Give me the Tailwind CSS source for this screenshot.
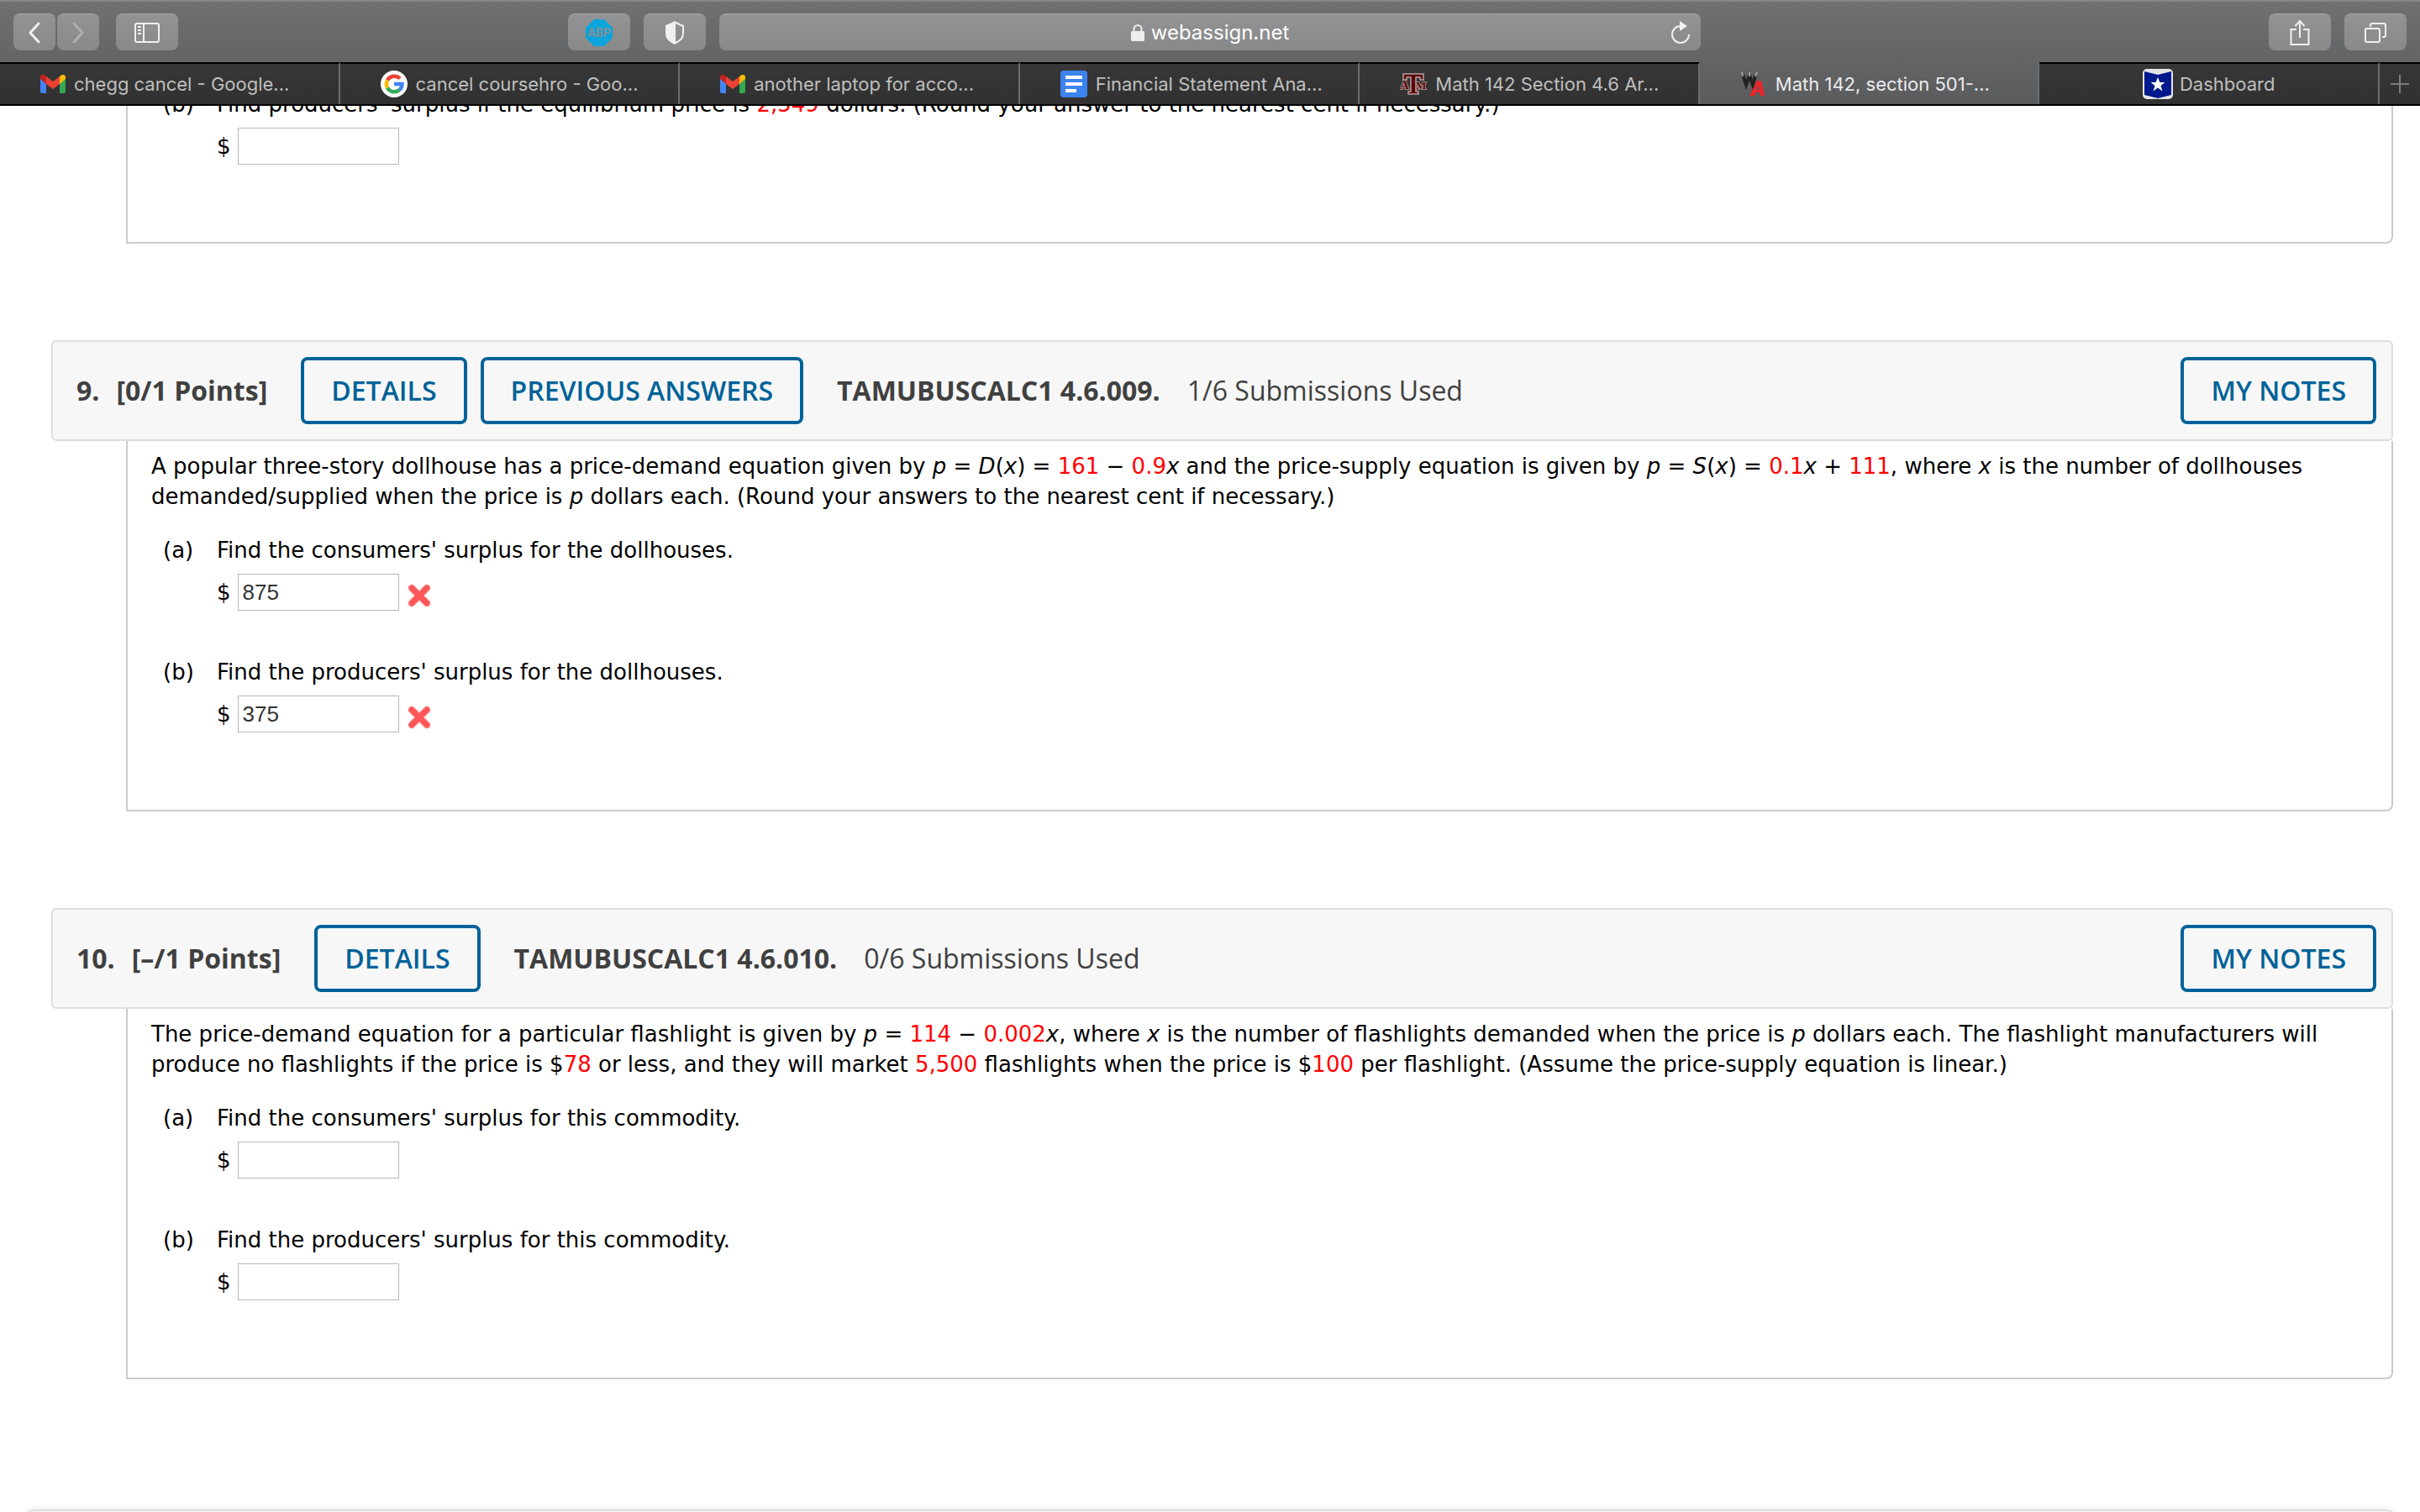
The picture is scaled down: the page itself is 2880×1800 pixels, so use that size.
<!DOCTYPE html>
<html lang="en">
<head>
<meta charset="utf-8">
<title>Math 142, section 501</title>
<script src="https://cdn.jsdelivr.net/npm/@tailwindcss/browser@4"></script>
</head>
<body class="flex h-screen flex-col overflow-hidden bg-white font-['DejaVu_Sans',sans-serif] text-[26px] leading-9 text-black">

<!-- Browser chrome -->
<header class="shrink-0 border-b-2 border-black bg-linear-to-b from-[#707173] to-[#5a5b5d] font-[Inter,sans-serif] text-[22px]">
  <div class="flex h-[74px] items-center border-t-2 border-[#868789] px-4">
    <div class="flex flex-1 items-center">
      <button aria-label="Back" class="flex h-11 w-[50px] items-center justify-center rounded-lg border-t border-[#a5a6a7] bg-linear-to-b from-[#929394] to-[#89898a]">
        <svg class="h-7 w-5" viewBox="0 0 20 28" fill="none" stroke="#f0f0f0" stroke-width="3" stroke-linecap="round" stroke-linejoin="round"><path d="M15 3 5 14l10 11"/></svg>
      </button>
      <button aria-label="Forward" class="ml-0.5 flex h-11 w-[50px] items-center justify-center rounded-lg border-t border-[#a5a6a7] bg-linear-to-b from-[#929394] to-[#89898a]">
        <svg class="h-7 w-5" viewBox="0 0 20 28" fill="none" stroke="#b0b0b1" stroke-width="3" stroke-linecap="round" stroke-linejoin="round"><path d="m5 3 10 11L5 25"/></svg>
      </button>
      <button aria-label="Show sidebar" class="ml-5 flex h-11 w-[74px] items-center justify-center rounded-lg border-t border-[#a5a6a7] bg-linear-to-b from-[#929394] to-[#89898a]">
        <svg class="h-6 w-[30px]" viewBox="0 0 30 24" fill="none" stroke="#f0f0f0" stroke-width="2"><rect x="1" y="1" width="28" height="22" rx="2"/><path d="M11 1v22M4 5h4M4 9h4M4 13h4"/></svg>
      </button>
      <button aria-label="Adblock Plus" class="ml-auto flex h-11 w-[74px] items-center justify-center rounded-lg border-t border-[#a5a6a7] bg-linear-to-b from-[#929394] to-[#89898a]">
        <svg class="size-8" viewBox="0 0 32 32"><path d="M10 0h12l10 10v12L22 32H10L0 22V10z" fill="#0aa5dc"/><text x="16" y="21" text-anchor="middle" font-family="Roboto" font-weight="700" font-size="14" fill="#858f94">ABP</text></svg>
      </button>
      <button aria-label="Privacy report" class="ml-4 flex h-11 w-[74px] items-center justify-center rounded-lg border-t border-[#a5a6a7] bg-linear-to-b from-[#929394] to-[#89898a]">
        <svg class="h-7 w-6" viewBox="0 0 24 28" fill="none" stroke="#f0f0f0" stroke-width="2"><path d="M12 1.500 22 6v9c0 5-4 9-10 11.500C6 24 2 20 2 15V6z"/><path d="M12 1.500v25C6 24 2 20 2 15V6z" fill="#f0f0f0"/></svg>
      </button>
    </div>
    <div class="mx-4 flex h-11 w-[41%] items-center rounded-lg border-t border-[#a5a6a7] bg-linear-to-b from-[#929394] to-[#89898a] px-3">
      <div class="flex flex-1 items-center justify-center gap-2 pl-6 text-[24px] text-white">
        <svg class="h-5 w-4" viewBox="0 0 16 20"><path d="M3.500 9V5.500a4.500 4.500 0 0 1 9 0V9" fill="none" stroke="#eee" stroke-width="2"/><rect y="8" width="16" height="12" rx="1.500" fill="#eee"/></svg>
        <span>webassign.net</span>
      </div>
      <button aria-label="Reload" class="flex">
        <svg class="h-7 w-6" viewBox="0 0 24 28"><path d="M12 6a10 10 0 1 0 10 10" fill="none" stroke="#f0f0f0" stroke-width="2"/><path d="m11 0 9 6-9 6z" fill="#f0f0f0"/></svg>
      </button>
    </div>
    <div class="flex flex-1 justify-end gap-4">
      <button aria-label="Share" class="flex h-11 w-[74px] items-center justify-center rounded-lg border-t border-[#a5a6a7] bg-linear-to-b from-[#929394] to-[#89898a]">
        <svg class="h-8 w-6" viewBox="0 0 24 32" fill="none" stroke="#f0f0f0" stroke-width="2"><path d="M8 12H1.500v18h21V12H16M12 22V2M6.500 8 12 2l5.500 6"/></svg>
      </button>
      <button aria-label="Show all tabs" class="flex h-11 w-[74px] items-center justify-center rounded-lg border-t border-[#a5a6a7] bg-linear-to-b from-[#929394] to-[#89898a]">
        <svg class="h-6 w-[26px]" viewBox="0 0 26 24" fill="none" stroke="#f0f0f0" stroke-width="2"><rect x="1" y="7" width="17" height="16" rx="2"/><path d="M7 5V3a2 2 0 0 1 2-2h14a2 2 0 0 1 2 2v12a2 2 0 0 1-2 2h-2"/></svg>
      </button>
    </div>
  </div>
  <nav aria-label="Tabs" class="grid h-[50px] grid-cols-[repeat(7,1fr)_48px] text-[#bfbfbf]">
    <a href="#" class="flex items-center gap-[10px] border-t-2 border-r-2 border-t-black border-r-[#6c6d6e] bg-linear-to-b from-[#373737] to-[#303130] pl-12">
      <svg class="h-[22px] w-[30px]" viewBox="0 0 30 22"><path d="M0 3v17a2 2 0 0 0 2 2h5V9z" fill="#4285f4"/><path d="M30 3v17a2 2 0 0 1-2 2h-5V9z" fill="#34a853"/><path d="M23 2v9l7-6V3c0-3-3-4-5-2.500z" fill="#fbbc04"/><path d="M7 2v9L0 5V3C0 0 3-1 5 .5z" fill="#c5221f"/><path d="M7 2l8 6 8-6v9l-8 6-8-6z" fill="#ea4335"/></svg>
      <span>chegg cancel - Google...</span>
    </a>
    <a href="#" class="flex items-center gap-[10px] border-t-2 border-r-2 border-t-black border-r-[#6c6d6e] bg-linear-to-b from-[#373737] to-[#303130] pl-12">
      <svg class="size-8" viewBox="0 0 32 32"><circle cx="16" cy="16" r="16" fill="#fff"/><g fill="none" stroke-width="4.500"><path d="M8 11.500A9.500 9.500 0 0 1 23 9.500" stroke="#ea4335"/><path d="M8 20.500a9.500 9.500 0 0 1 0-9" stroke="#fbbc04"/><path d="M22.500 23A9.500 9.500 0 0 1 8 20.500" stroke="#34a853"/><path d="M16 16h9.500a9.500 9.500 0 0 1-3 7" stroke="#4285f4"/></g></svg>
      <span>cancel coursehro - Goo...</span>
    </a>
    <a href="#" class="flex items-center gap-[10px] border-t-2 border-r-2 border-t-black border-r-[#6c6d6e] bg-linear-to-b from-[#373737] to-[#303130] pl-12">
      <svg class="h-[22px] w-[30px]" viewBox="0 0 30 22"><path d="M0 3v17a2 2 0 0 0 2 2h5V9z" fill="#4285f4"/><path d="M30 3v17a2 2 0 0 1-2 2h-5V9z" fill="#34a853"/><path d="M23 2v9l7-6V3c0-3-3-4-5-2.500z" fill="#fbbc04"/><path d="M7 2v9L0 5V3C0 0 3-1 5 .5z" fill="#c5221f"/><path d="M7 2l8 6 8-6v9l-8 6-8-6z" fill="#ea4335"/></svg>
      <span>another laptop for acco...</span>
    </a>
    <a href="#" class="flex items-center gap-[10px] border-t-2 border-r-2 border-t-black border-r-[#6c6d6e] bg-linear-to-b from-[#373737] to-[#303130] pl-12">
      <svg class="size-8" viewBox="0 0 32 32"><rect width="32" height="32" rx="4" fill="#3c83f1"/><path d="M6 8h20M6 16h20M6 24h13" stroke="#fff" stroke-width="4"/></svg>
      <span>Financial Statement Ana...</span>
    </a>
    <a href="#" class="flex items-center gap-[10px] border-t-2 border-r-2 border-t-black border-r-[#6c6d6e] bg-linear-to-b from-[#373737] to-[#303130] pl-12">
      <svg class="h-[26px] w-8" viewBox="0 0 32 26" fill="#5c0808" stroke="#b8a0a0" stroke-width="1.500" font-family="Liberation Serif" font-weight="700"><path d="M4 1h24v7h-4V5h-5v17h3v3H10v-3h3V5H8v3H4z"/><g paint-order="stroke"><text x="0" y="19" font-size="15">A</text><text x="19" y="19" font-size="13">M</text></g></svg>
      <span>Math 142 Section 4.6 Ar...</span>
    </a>
    <a href="#" aria-current="page" class="flex items-center gap-[10px] border-r-2 border-r-[#6c6d6e] pl-12 pt-0.5 text-[#ececec]">
      <svg class="h-[30px] w-8" viewBox="0 0 32 30"><g fill="none" stroke-width="4"><path d="m3 4 4 12 4-11 4 11 3-11" stroke="#222"/><path d="M2 1l1 5M11 1v5M20 1l-2 5" stroke="#a5a5a5" stroke-width="2"/></g><path fill-rule="evenodd" d="M20 11h5l4 18h-5l-1-4h-4l-2 4h-6zm1 6-2 5h3z" fill="#e5262b"/></svg>
      <span>Math 142, section 501-...</span>
    </a>
    <a href="#" class="flex items-center justify-center gap-2 border-t-2 border-r-2 border-t-black border-r-[#6c6d6e] bg-linear-to-b from-[#373737] to-[#303130]">
      <svg class="size-9" viewBox="0 0 36 36"><rect width="36" height="36" rx="5" fill="#e4e4e6"/><path d="M2 3l16 4 16-4v28l-16 4-16-4z" fill="#00198c"/><path d="m18 10 2.400 6h6l-4.800 4 1.800 6.500-5.400-4-5.400 4 1.800-6.500-4.800-4h6z" fill="#fff"/></svg>
      <span>Dashboard</span>
    </a>
    <button aria-label="New tab" class="flex items-center justify-center border-t-2 border-black bg-linear-to-b from-[#373737] to-[#303130]">
      <svg class="size-[22px]" viewBox="0 0 22 22" stroke="#7c7c7c" stroke-width="2"><path d="M11 0v22M0 11h22"/></svg>
    </button>
  </nav>
</header>

<!-- Assignment, scrolled part way down -->
<main class="min-h-0 flex-1 overflow-hidden">
  <div class="-mt-5 pr-8 pl-[61px]">

    <section aria-label="Question 8" class="ml-[89px] rounded-br-lg border-2 border-t-0 border-[#cbcbcb] pr-4 pb-[92px] pl-[42px]">
      <div class="grid grid-cols-[64px_1fr]">
        <span>(b)</span>
        <label for="q8b">Find producers' surplus if the equilibrium price is <span class="text-[#ff0000]">2,549</span> dollars. (Round your answer to the nearest cent if necessary.)</label>
        <div class="col-start-2 mt-[10px] flex items-center gap-2">
          <span>$</span>
          <input id="q8b" type="text" class="h-11 w-48 border border-[#b8b8b8] px-[5px] font-['Liberation_Sans',sans-serif] text-[#333]">
        </div>
      </div>
    </section>

    <section aria-label="Question 9" class="mt-[115px]">
      <div class="flex h-[120px] items-center rounded-md border-2 border-[#dedede] bg-[#f7f7f7] pr-[18px] pl-7 font-['Open_Sans',sans-serif] text-[32px] leading-10 text-[#404040]">
        <h2 class="flex gap-5 font-bold"><span>9.</span><span>[0/1 Points]</span></h2>
        <button class="ml-10 h-20 rounded-lg border-4 border-[#006298] px-8 font-semibold text-[#006298]">DETAILS</button>
        <button class="ml-4 h-20 rounded-lg border-4 border-[#006298] px-8 font-semibold text-[#006298]">PREVIOUS ANSWERS</button>
        <strong class="ml-10 font-bold">TAMUBUSCALC1 4.6.009.</strong>
        <span class="ml-8">1/6 Submissions Used</span>
        <button class="ml-auto h-20 rounded-lg border-4 border-[#006298] px-8 font-semibold text-[#006298]">MY NOTES</button>
      </div>
      <div class="ml-[89px] rounded-br-lg border-2 border-t-0 border-[#cbcbcb] pt-3 pr-4 pb-[92px] pl-7">
        <p>A popular three-story dollhouse has a price-demand equation given by <i>p</i> = <i>D</i>(<i>x</i>) = <span class="text-[#ff0000]">161</span> − <span class="text-[#ff0000]">0.9</span><i>x</i> and the price-supply equation is given by <i>p</i> = <i>S</i>(<i>x</i>) = <span class="text-[#ff0000]">0.1</span><i>x</i> + <span class="text-[#ff0000]">111</span>, where <i>x</i> is the number of dollhouses demanded/supplied when the price is <i>p</i> dollars each. (Round your answers to the nearest cent if necessary.)</p>
        <div class="mt-7 grid grid-cols-[64px_1fr] pl-[14px]">
          <span>(a)</span>
          <label for="q9a">Find the consumers' surplus for the dollhouses.</label>
          <div class="col-start-2 mt-[10px] mb-[55px] flex items-center gap-2">
            <span>$</span>
            <input id="q9a" type="text" value="875" class="h-11 w-48 border border-[#b8b8b8] px-[5px] font-['Liberation_Sans',sans-serif] text-[#333]">
            <svg role="img" aria-label="Incorrect" class="mt-2 size-8" viewBox="0 0 32 32" fill="none" stroke-linecap="round"><path d="M7 7 25 25M25 7 7 25" stroke="#ffb9b9" stroke-width="9"/><path d="M7 7 25 25M25 7 7 25" stroke="#fc5759" stroke-width="7"/></svg>
          </div>
          <span>(b)</span>
          <label for="q9b">Find the producers' surplus for the dollhouses.</label>
          <div class="col-start-2 mt-[10px] flex items-center gap-2">
            <span>$</span>
            <input id="q9b" type="text" value="375" class="h-11 w-48 border border-[#b8b8b8] px-[5px] font-['Liberation_Sans',sans-serif] text-[#333]">
            <svg role="img" aria-label="Incorrect" class="mt-2 size-8" viewBox="0 0 32 32" fill="none" stroke-linecap="round"><path d="M7 7 25 25M25 7 7 25" stroke="#ffb9b9" stroke-width="9"/><path d="M7 7 25 25M25 7 7 25" stroke="#fc5759" stroke-width="7"/></svg>
          </div>
        </div>
      </div>
    </section>

    <section aria-label="Question 10" class="mt-[115px]">
      <div class="flex h-[120px] items-center rounded-md border-2 border-[#dedede] bg-[#f7f7f7] pr-[18px] pl-7 font-['Open_Sans',sans-serif] text-[32px] leading-10 text-[#404040]">
        <h2 class="flex gap-5 font-bold"><span>10.</span><span>[–/1 Points]</span></h2>
        <button class="ml-10 h-20 rounded-lg border-4 border-[#006298] px-8 font-semibold text-[#006298]">DETAILS</button>
        <strong class="ml-10 font-bold">TAMUBUSCALC1 4.6.010.</strong>
        <span class="ml-8">0/6 Submissions Used</span>
        <button class="ml-auto h-20 rounded-lg border-4 border-[#006298] px-8 font-semibold text-[#006298]">MY NOTES</button>
      </div>
      <div class="ml-[89px] rounded-br-lg border-2 border-t-0 border-[#cbcbcb] pt-3 pr-4 pb-[92px] pl-7">
        <p>The price-demand equation for a particular flashlight is given by <i>p</i> = <span class="text-[#ff0000]">114</span> − <span class="text-[#ff0000]">0.002</span><i>x</i>, where <i>x</i> is the number of flashlights demanded when the price is <i>p</i> dollars each. The flashlight manufacturers will produce no flashlights if the price is $<span class="text-[#ff0000]">78</span> or less, and they will market <span class="text-[#ff0000]">5,500</span> flashlights when the price is $<span class="text-[#ff0000]">100</span> per flashlight. (Assume the price-supply equation is linear.)</p>
        <div class="mt-7 grid grid-cols-[64px_1fr] pl-[14px]">
          <span>(a)</span>
          <label for="q10a">Find the consumers' surplus for this commodity.</label>
          <div class="col-start-2 mt-[10px] mb-[55px] flex items-center gap-2">
            <span>$</span>
            <input id="q10a" type="text" class="h-11 w-48 border border-[#b8b8b8] px-[5px] font-['Liberation_Sans',sans-serif] text-[#333]">
          </div>
          <span>(b)</span>
          <label for="q10b">Find the producers' surplus for this commodity.</label>
          <div class="col-start-2 mt-[10px] flex items-center gap-2">
            <span>$</span>
            <input id="q10b" type="text" class="h-11 w-48 border border-[#b8b8b8] px-[5px] font-['Liberation_Sans',sans-serif] text-[#333]">
          </div>
        </div>
      </div>
    </section>
  </div>

  <footer class="mx-8 mt-[155px] h-24 rounded-md border-2 border-[#dedede] bg-[#f7f7f7] shadow-[0_0_10px_rgba(0,0,0,0.1)]"></footer>
</main>
</body>
</html>
